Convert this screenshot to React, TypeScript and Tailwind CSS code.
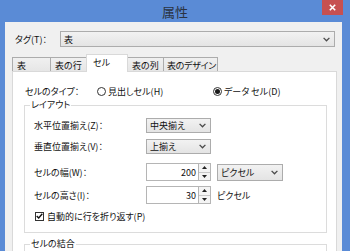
import { ReactNode } from 'react';

function Chevron() {
  return (
    <svg width="7" height="5" viewBox="0 0 7 5">
      <path d="M0.6 0.9 L3.5 3.8 L6.4 0.9" stroke="#4a4a4a" strokeWidth="1.3" fill="none" />
    </svg>
  );
}

function Select({ label, className }: { label: string; className: string }) {
  return (
    <div
      className={`flex items-center justify-between border border-[#acacac] bg-linear-to-b from-[#f2f2f2] to-[#e4e4e4] pl-[3px] pr-[4px] ${className}`}
    >
      <span>{label}</span>
      <Chevron />
    </div>
  );
}

function Spin({ value }: { value: string }) {
  return (
    <div className="flex h-[18px] w-[65px]">
      <div className="flex-1 flex items-center justify-end pr-[2px] border border-[#b5b5b5] bg-white">
        {value}
      </div>
      <div className="w-[12px] flex flex-col border border-l-0 border-[#b5b5b5] bg-[#f4f4f4]">
        <div className="flex-1 flex items-center justify-center border-b border-[#c8c8c8]">
          <svg width="5" height="3" viewBox="0 0 5 3">
            <path d="M0 3 L2.5 0 L5 3 Z" fill="#222" />
          </svg>
        </div>
        <div className="flex-1 flex items-center justify-center">
          <svg width="5" height="3" viewBox="0 0 5 3">
            <path d="M0 0 L2.5 3 L5 0 Z" fill="#222" />
          </svg>
        </div>
      </div>
    </div>
  );
}

function Radio({ checked, label }: { checked?: boolean; label: string }) {
  return (
    <div className="flex items-center gap-[2px]">
      <div className="w-[9px] h-[9px] rounded-full border border-[#333] bg-white flex items-center justify-center">
        {checked && <div className="w-[5px] h-[5px] rounded-full bg-[#1a1a1a]" />}
      </div>
      <span>{label}</span>
    </div>
  );
}

function Row({ label, children, h, mt }: { label: string; children: ReactNode; h: string; mt: string }) {
  return (
    <div className={`flex items-center ${h} ${mt}`}>
      <span className="w-[112px]">{label}</span>
      {children}
    </div>
  );
}

const tabs = [
  { name: '表', w: 'w-[39px]', pad: 'pl-[4px]' },
  { name: '表の行', w: 'w-[37px]', pad: 'pl-[4px]' },
  { name: 'セル', w: 'w-[42px]', pad: 'pl-[6px]', active: true },
  { name: '表の列', w: 'w-[37px]', pad: 'pl-[4px]' },
  { name: '表のデザイン', w: 'w-[55px]', pad: 'pl-[3px] tracking-[-0.3px]' },
];

export default function App() {
  return (
    <div className="w-[350px] h-[251px] overflow-hidden bg-[#5a8bd6] flex flex-col font-['Noto_Sans_CJK_JP','Noto_Sans',sans-serif] [font-feature-settings:'palt'] text-[9px] text-[#111] leading-none">
      {/* title bar */}
      <div className="relative h-[22px] shrink-0 flex items-center justify-center">
        <span className="text-[13px] text-[#2a3342]">属性</span>
        <div className="absolute right-[7px] top-0 w-[21px] h-[15px] bg-[#c75050] flex items-center justify-center">
          <svg width="7" height="7" viewBox="0 0 7 7">
            <path d="M0.8 0.8 L6.2 6.2 M6.2 0.8 L0.8 6.2" stroke="#fff" strokeWidth="1.6" />
          </svg>
        </div>
      </div>

      <div className="flex-1 min-h-0 ml-[5px] mr-[8px] bg-[#f0f0f0] flex flex-col">
        <div className="flex items-center h-[16px] mt-[9px] pl-[10px] pr-[7px]">
          <span className="w-[45px]">タグ(T)：</span>
          <Select label="表" className="flex-1 h-[16px]" />
        </div>

        {/* tabs */}
        <div className="flex items-end h-[18px] mt-[7px] ml-[7px] whitespace-nowrap">
          {tabs.map((t, i) =>
            t.active ? (
              <div
                key={t.name}
                className={`relative z-10 ${t.w} h-[18px] -ml-px bg-white border border-b-0 border-[#d9d9d9] ${t.pad} pt-[3px]`}
              >
                {t.name}
              </div>
            ) : (
              <div
                key={t.name}
                className={`${t.w} h-[15px] ${i > 0 ? '-ml-px' : ''} border border-b-0 border-[#acacac] bg-linear-to-b from-[#f0f0f0] to-[#e5e5e5] ${t.pad} pt-[3px]`}
              >
                {t.name}
              </div>
            )
          )}
        </div>

        {/* panel */}
        <div className="flex-1 -mt-px ml-[7px] mr-[5px] bg-white border border-b-0 border-[#d9d9d9] pt-[12px]">
          <div className="flex items-center h-[14px] pl-[12px]">
            <span className="w-[72px]">セルのタイプ：</span>
            <div className="w-[116px]">
              <Radio label="見出しセル(H)" />
            </div>
            <Radio checked label="データ セル(D)" />
          </div>

          <div className="relative mt-[7px] ml-[11px] mr-[9px] border border-[#dcdcdc] pt-[12px] pb-[10px] pl-[9px]">
            <span className="absolute -top-[6px] left-[5px] bg-white px-[1px]">レイアウト</span>
            <Row label="水平位置揃え(Z)：" h="h-[15px]" mt="mt-0">
              <Select label="中央揃え" className="w-[65px] h-[15px]" />
            </Row>
            <Row label="垂直位置揃え(V)：" h="h-[15px]" mt="mt-[6px]">
              <Select label="上揃え" className="w-[65px] h-[15px]" />
            </Row>
            <Row label="セルの幅(W)：" h="h-[18px]" mt="mt-[9px]">
              <Spin value="200" />
              <Select label="ピクセル" className="ml-[6px] w-[66px] h-[17px]" />
            </Row>
            <Row label="セルの高さ(I)：" h="h-[18px]" mt="mt-[5px]">
              <Spin value="30" />
              <span className="ml-[6px]">ピクセル</span>
            </Row>
            <div className="flex items-center h-[12px] mt-[6px] gap-[3px] pl-px">
              <div className="w-[9px] h-[9px] border border-[#333] bg-white flex items-center justify-center">
                <svg width="7" height="6" viewBox="0 0 7 6">
                  <path d="M0.7 3 L2.7 5 L6.3 0.8" stroke="#111" strokeWidth="1.4" fill="none" />
                </svg>
              </div>
              <span>自動的に行を折り返す(P)</span>
            </div>
          </div>

          <div className="relative mt-[11px] ml-[11px] mr-[9px] h-[30px] border border-b-0 border-[#dcdcdc]">
            <span className="absolute -top-[6px] left-[5px] bg-white px-[1px]">セルの結合</span>
          </div>
        </div>
      </div>
    </div>
  );
}
